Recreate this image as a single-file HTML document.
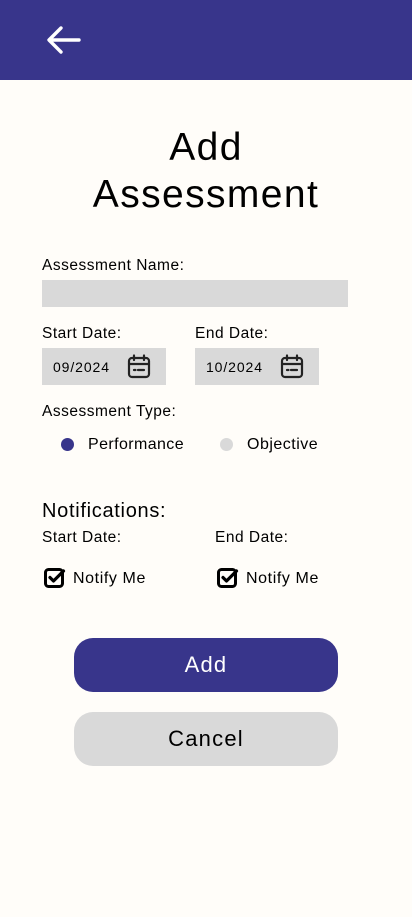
<!DOCTYPE html>
<html><head><meta charset="utf-8"><style>
*{margin:0;padding:0;box-sizing:border-box}
body{width:412px;height:917px;background:#fffdf9;font-family:"Liberation Sans",sans-serif;color:#000;position:relative;overflow:hidden}
.a{position:absolute;white-space:nowrap}
.hdr{position:absolute;left:0;top:0;width:412px;height:80px;background:#38358b}
.lbl{font-size:15.5px;line-height:18px;letter-spacing:0.5px}
.box{position:absolute;background:#d9d9d9}
.btn{position:absolute;left:74px;width:264px;height:54px;border-radius:19px;font-size:22px;text-align:center;line-height:54px;letter-spacing:1.2px}
</style></head><body>
<div class="hdr"></div>
<svg class="a" style="left:46px;top:24px" width="36" height="32" viewBox="0 0 36 32"><path d="M33 16H4M15 4L3 16L15 28" stroke="#fff" stroke-width="3.4" fill="none" stroke-linecap="round" stroke-linejoin="round"/></svg>
<div class="a" style="left:0;width:412px;top:124px;text-align:center;font-size:39px;line-height:47px;letter-spacing:1.4px">Add<br>Assessment</div>
<div class="a lbl" style="left:42px;top:257px">Assessment Name:</div>
<div class="box" style="left:42px;top:280px;width:306px;height:27px"></div>
<div class="a lbl" style="left:42px;top:325px">Start Date:</div>
<div class="a lbl" style="left:195px;top:325px">End Date:</div>
<div class="box" style="left:42px;top:348px;width:124px;height:37px"></div>
<div class="box" style="left:195px;top:348px;width:124px;height:37px"></div>
<div class="a" style="left:53px;top:358px;font-size:14px;line-height:18px;letter-spacing:0.9px">09/2024</div>
<div class="a" style="left:206px;top:358px;font-size:14px;line-height:18px;letter-spacing:0.9px">10/2024</div>
<svg class="a" style="left:127px;top:354px" width="24" height="25" viewBox="0 0 24 25"><rect x="2" y="4" width="20" height="19" rx="3" stroke="#222" stroke-width="2.2" fill="none"/><path d="M2 10H22M7 1.5V6M17 1.5V6M7 16h1.5M11 16h6" stroke="#222" stroke-width="2.2" fill="none" stroke-linecap="round"/></svg>
<svg class="a" style="left:280px;top:354px" width="24" height="25" viewBox="0 0 24 25"><rect x="2" y="4" width="20" height="19" rx="3" stroke="#222" stroke-width="2.2" fill="none"/><path d="M2 10H22M7 1.5V6M17 1.5V6M7 16h1.5M11 16h6" stroke="#222" stroke-width="2.2" fill="none" stroke-linecap="round"/></svg>
<div class="a lbl" style="left:42px;top:403px">Assessment Type:</div>
<div class="a" style="left:61px;top:438px;width:13px;height:13px;border-radius:50%;background:#38358b"></div>
<div class="a" style="left:88px;top:435px;font-size:16px;line-height:19px;letter-spacing:0.4px">Performance</div>
<div class="a" style="left:220px;top:438px;width:13px;height:13px;border-radius:50%;background:#d9d9d9"></div>
<div class="a" style="left:247px;top:435px;font-size:16px;line-height:19px;letter-spacing:0.5px">Objective</div>
<div class="a" style="left:42px;top:499px;font-size:20px;line-height:24px;letter-spacing:0.7px">Notifications:</div>
<div class="a lbl" style="left:42px;top:529px">Start Date:</div>
<div class="a lbl" style="left:215px;top:529px">End Date:</div>
<svg class="a" style="left:44px;top:567px" width="22" height="22" viewBox="0 0 22 22"><rect x="1.5" y="2.5" width="17" height="17" rx="3" stroke="#000" stroke-width="3" fill="none"/><path d="M6 10.5l3.5 3.5L19.5 4" stroke="#000" stroke-width="3.2" fill="none" stroke-linecap="round" stroke-linejoin="round"/></svg>
<div class="a" style="left:73px;top:569px;font-size:16px;line-height:19px;letter-spacing:0.6px">Notify Me</div>
<svg class="a" style="left:217px;top:567px" width="22" height="22" viewBox="0 0 22 22"><rect x="1.5" y="2.5" width="17" height="17" rx="3" stroke="#000" stroke-width="3" fill="none"/><path d="M6 10.5l3.5 3.5L19.5 4" stroke="#000" stroke-width="3.2" fill="none" stroke-linecap="round" stroke-linejoin="round"/></svg>
<div class="a" style="left:246px;top:569px;font-size:16px;line-height:19px;letter-spacing:0.6px">Notify Me</div>
<div class="btn" style="top:638px;background:#38358b;color:#fff">Add</div>
<div class="btn" style="top:712px;background:#d9d9d9;color:#000">Cancel</div>
</body></html>
